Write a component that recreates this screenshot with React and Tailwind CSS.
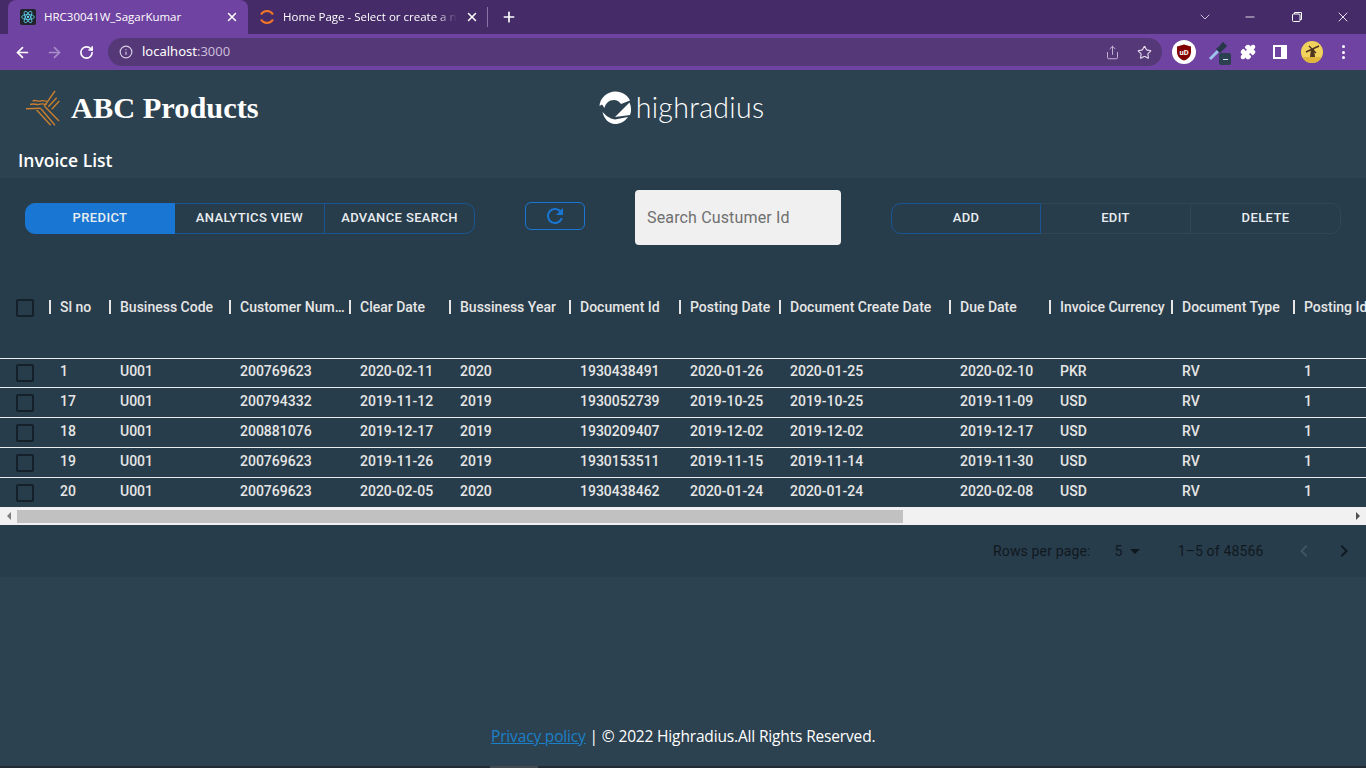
import React from 'react';
import { ArrowLeft, ArrowRight, RotateCw, Info, Share, Star, Puzzle, X, Plus, ChevronDown, Minus } from 'lucide-react';

const columns = [
  { label: 'Sl no', key: 'sl', width: 'w-[60px]' },
  { label: 'Business Code', key: 'code', width: 'w-[120px]' },
  { label: 'Customer Number', key: 'cust', width: 'w-[120px]' },
  { label: 'Clear Date', key: 'clear', width: 'w-[100px]' },
  { label: 'Bussiness Year', key: 'year', width: 'w-[120px]' },
  { label: 'Document Id', key: 'doc', width: 'w-[110px]' },
  { label: 'Posting Date', key: 'post', width: 'w-[100px]' },
  { label: 'Document Create Date', key: 'create', width: 'w-[170px]' },
  { label: 'Due Date', key: 'due', width: 'w-[100px]' },
  { label: 'Invoice Currency', key: 'cur', width: 'w-[122px]' },
  { label: 'Document Type', key: 'type', width: 'w-[122px]' },
  { label: 'Posting Id', key: 'pid', width: 'w-[122px]' },
];

const rows = [
  { sl: '1', code: 'U001', cust: '200769623', clear: '2020-02-11', year: '2020', doc: '1930438491', post: '2020-01-26', create: '2020-01-25', due: '2020-02-10', cur: 'PKR', type: 'RV', pid: '1' },
  { sl: '17', code: 'U001', cust: '200794332', clear: '2019-11-12', year: '2019', doc: '1930052739', post: '2019-10-25', create: '2019-10-25', due: '2019-11-09', cur: 'USD', type: 'RV', pid: '1' },
  { sl: '18', code: 'U001', cust: '200881076', clear: '2019-12-17', year: '2019', doc: '1930209407', post: '2019-12-02', create: '2019-12-02', due: '2019-12-17', cur: 'USD', type: 'RV', pid: '1' },
  { sl: '19', code: 'U001', cust: '200769623', clear: '2019-11-26', year: '2019', doc: '1930153511', post: '2019-11-15', create: '2019-11-14', due: '2019-11-30', cur: 'USD', type: 'RV', pid: '1' },
  { sl: '20', code: 'U001', cust: '200769623', clear: '2020-02-05', year: '2020', doc: '1930438462', post: '2020-01-24', create: '2020-01-24', due: '2020-02-08', cur: 'USD', type: 'RV', pid: '1' },
];

const Checkbox = () => (
  <div className="w-[50px] shrink-0 pl-[13px] flex items-center">
    <svg width="24" height="24" viewBox="0 0 24 24" fill="#14202a">
      <path d="M19 5v14H5V5h14m0-2H5c-1.1 0-2 .9-2 2v14c0 1.1.9 2 2 2h14c1.1 0 2-.9 2-2V5c0-1.1-.9-2-2-2z" />
    </svg>
  </div>
);

const ReactFavicon = () => (
  <div className="w-[16px] h-[16px] rounded-[2px] bg-[#20232a] flex items-center justify-center">
    <svg width="14" height="14" viewBox="-12 -12 24 24" fill="none" stroke="#61dafb" strokeWidth="1.3">
      <circle r="2" fill="#61dafb" stroke="none" />
      <ellipse rx="11" ry="4.2" />
      <ellipse rx="11" ry="4.2" transform="rotate(60)" />
      <ellipse rx="11" ry="4.2" transform="rotate(120)" />
    </svg>
  </div>
);

const ChromeBar = () => (
  <div className="font-['Open_Sans',sans-serif]">
    <div className="h-[34px] bg-[#452b68] flex items-end">
      <div className="ml-[8px] w-[240px] h-[34px] bg-[#6f43a1] rounded-t-[8px] flex items-center pl-[12px] pr-[9px] gap-[8px]">
        <ReactFavicon />
        <span className="text-[11.5px] text-white flex-1 truncate">HRC30041W_SagarKumar</span>
        <X size={14} color="#fff" strokeWidth={2.5} />
      </div>
      <div className="w-[239px] h-[34px] flex items-center pl-[11px] pr-[8px] gap-[8px]">
        <svg width="16" height="16" viewBox="0 0 16 16" fill="none" stroke="#f37626" strokeWidth="2">
          <path d="M2 5.5 A7 7 0 0 1 14 5.5" />
          <path d="M2 10.5 A7 7 0 0 0 14 10.5" />
        </svg>
        <span className="text-[11.5px] text-white flex-1 whitespace-nowrap overflow-hidden [mask-image:linear-gradient(to_right,black_88%,transparent)]">Home Page - Select or create a new</span>
        <X size={14} color="#fff" strokeWidth={2.5} />
      </div>
      <div className="w-[1px] h-[20px] bg-[#8a75a5] mb-[7px]" />
      <div className="h-[34px] flex items-center ml-[13px]">
        <Plus size={16} color="#fff" strokeWidth={2.5} />
      </div>
      <div className="ml-auto h-[34px] flex items-center">
        <ChevronDown size={16} color="#e0d8ea" strokeWidth={1.3} className="mr-[30px]" />
        <Minus size={14} color="#fff" strokeWidth={1.4} className="mr-[34px]" />
        <svg width="12" height="12" viewBox="0 0 12 12" fill="none" stroke="#fff" className="mr-[32px]">
          <rect x="1.5" y="3" width="7.5" height="7.5" rx="1" />
          <path d="M3.5 3V1.5h7V8.5H9" />
        </svg>
        <X size={16} color="#fff" strokeWidth={1.3} className="mr-[15px]" />
      </div>
    </div>
    <div className="h-[36px] bg-[#6f43a1] flex items-center pl-[14px]">
      <ArrowLeft size={17} color="#fff" strokeWidth={2.4} />
      <ArrowRight size={17} color="#a98cca" strokeWidth={2.4} className="ml-[15px]" />
      <RotateCw size={15} color="#fff" strokeWidth={2.6} className="ml-[16px]" />
      <div className="ml-[14px] w-[1054px] h-[28px] rounded-full bg-[#553878] flex items-center pl-[11px] pr-[10px]">
        <Info size={14} color="#d8cfe4" strokeWidth={2} />
        <span className="ml-[9px] text-[13px] text-white font-['Noto_Sans',sans-serif]">localhost<span className="text-[#c9bcd9]">:3000</span></span>
        <Share size={15} color="#c9bcd9" strokeWidth={1.5} className="ml-auto mr-[17px]" />
        <Star size={15} color="#e4dcec" strokeWidth={1.8} />
      </div>
      <div className="ml-[10px] w-[24px] h-[24px] rounded-full bg-white flex items-center justify-center">
        <svg width="16" height="17" viewBox="0 0 16 17">
          <path d="M8 0.5 L15 2.5 V8 C15 12.5 11.5 15.5 8 16.5 C4.5 15.5 1 12.5 1 8 V2.5 Z" fill="#800000" />
          <text x="8" y="11" textAnchor="middle" fontSize="7.5" fontWeight="700" fill="#fff" fontFamily="Roboto, sans-serif">uD</text>
        </svg>
      </div>
      <div className="ml-[11px] w-[24px] h-[24px] relative">
        <svg width="20" height="20" viewBox="0 0 20 20" fill="none" className="absolute left-[1px] top-[1px]">
          <path d="M2 18 L10 10" stroke="#9ec4ee" strokeWidth="3" />
          <path d="M9 7 L13 11 M11 8 L15 3 L17 5 L12 10" stroke="#27384a" strokeWidth="3" />
        </svg>
        <div className="absolute left-[12px] top-[13px] w-[12px] h-[12px] rounded-[2px] bg-[#2b4050] flex items-center justify-center">
          <div className="w-[5px] h-[1px] bg-[#d9e2ea]" />
        </div>
      </div>
      <Puzzle size={16} color="#fff" fill="#fff" className="ml-[9px]" />
      <div className="ml-[17px] w-[14px] h-[14px] border-[2px] border-white flex justify-end">
        <div className="w-[4px] bg-white" />
      </div>
      <div className="ml-[14px] w-[22px] h-[22px] rounded-full bg-[#f1d25c] overflow-hidden flex items-center justify-center">
        <svg width="22" height="22" viewBox="0 0 22 22">
          <path d="M0 16 H22 V22 H0 Z" fill="#e0b63f" />
          <path d="M9 16 L10 8 H13 L14 16 Z" fill="#4d3320" />
          <path d="M5 11 L18 5 M8 5 L15 12" stroke="#4d3320" strokeWidth="1.4" />
        </svg>
      </div>
      <div className="ml-[19px] flex flex-col gap-[2.5px]">
        <div className="w-[3px] h-[3px] rounded-full bg-white" />
        <div className="w-[3px] h-[3px] rounded-full bg-white" />
        <div className="w-[3px] h-[3px] rounded-full bg-white" />
      </div>
    </div>
    <div className="h-[1px] bg-[#2d4250]" />
  </div>
);

const AbcLogo = () => (
  <svg width="36" height="38" viewBox="0 0 36 38" fill="none" stroke="#c97f30" strokeWidth="1.4">
    <path d="M6.7 11 C10 9.5 12 12 15 10.8 C17 10 19 11.5 20.7 11" />
    <path d="M4 14.5 C8 13 11 15.5 14 14.2 C17 13 19 15 20.7 14.3" />
    <path d="M0 18.7 L14.7 18.2" />
    <path d="M14.7 18.5 L29 35.3" />
    <path d="M10.7 20 L24.7 35.3" />
    <path d="M19 16.7 L33 31" />
    <path d="M18 16.7 L29 1" />
    <path d="M22.3 16.7 L30.7 7.7" />
    <path d="M25.7 19.3 L33.3 11" />
  </svg>
);

const HighradiusMark = () => (
  <svg width="33" height="34" viewBox="0 0 33 34" fill="#fff">
    <path d="M0.5 15 C1 7 8 0.5 16.5 0.5 C23 0.5 28.5 4 31 9.5 L22 13 C20 10.5 18 9 15 9 C10 9 6.5 12.5 5.5 17 L3 13.5 Z" />
    <path d="M16 26 L30.5 11.5 C32.5 16 32.5 20.5 31 24 Z" />
    <path d="M3.5 21 C7 24.5 10 27.5 16 28.5 L29 26 C26 30.5 21 33 16 33 C10 33 5 28 3.5 21 Z" />
  </svg>
);

const ButtonGroup = ({ labels, active, muted }) => (
  <div className="flex">
    {labels.map((label, i) => (
      <button
        key={label}
        className={`h-[31px] pb-[2px] text-[13px] font-medium tracking-[0.37px] uppercase text-[#e8edf1] border ${i > 0 ? 'ml-[-1px] w-[151px]' : 'w-[150px] relative z-10'} ${i === 0 ? 'rounded-l-[10px]' : ''} ${i === labels.length - 1 ? 'rounded-r-[10px]' : ''} ${label === active ? 'bg-[#1976d2] border-[#1976d2]' : muted && i > 0 ? 'border-[#314756]' : 'border-[#1a5590]'}`}
      >
        {label}
      </button>
    ))}
  </div>
);

const Toolbar = () => (
  <div className="h-[84px] flex items-start pl-[25px]">
    <div className="mt-[25px]">
      <ButtonGroup labels={['Predict', 'Analytics View', 'Advance Search']} active="Predict" />
    </div>
    <button className="mt-[24px] ml-[50px] w-[60px] h-[28px] border border-[#1976d2] rounded-[6px] flex items-center justify-center">
      <svg width="24" height="24" viewBox="0 0 24 24" fill="#1976d2">
        <path d="M17.65 6.35C16.2 4.9 14.21 4 12 4c-4.42 0-7.99 3.58-7.99 8s3.57 8 7.99 8c3.73 0 6.84-2.55 7.73-6h-2.08c-.82 2.33-3.04 4-5.65 4-3.31 0-6-2.69-6-6s2.69-6 6-6c1.66 0 3.14.69 4.22 1.78L13 11h7V4l-2.35 2.35z" />
      </svg>
    </button>
    <div className="mt-[12px] ml-[50px] w-[206px] h-[55px] bg-[#f0f0f0] rounded-[4px] flex items-center pl-[12px] text-[16px] text-[#6f6f6f] tracking-[0.15px]">
      Search Custumer Id
    </div>
    <div className="mt-[25px] ml-[50px]">
      <ButtonGroup labels={['Add', 'Edit', 'Delete']} muted />
    </div>
  </div>
);

const DataTable = () => (
  <div className="overflow-hidden">
    <div className="h-[97px] flex items-center pb-[4px] border-b border-[#e8ecef]">
      <Checkbox />
      {columns.map((col, i) => (
        <div key={col.key} className={`${col.width} shrink-0 flex items-center pr-[4px] pb-[2px]`}>
          <div className="w-[2px] h-[14px] bg-[#e6e6e6] shrink-0 ml-[-1px] mr-[9px]" />
          <span className={`text-[14px] font-medium text-[#e6e6e6] whitespace-nowrap ${i === 2 ? 'truncate' : ''}`}>{col.label}</span>
        </div>
      ))}
    </div>
    {rows.map((row, i) => (
      <div
        key={row.sl}
        className={`flex items-center ${i === 0 || i === rows.length - 1 ? 'h-[29px]' : 'h-[30px]'} ${i < rows.length - 1 ? 'border-b border-[#e8ecef]' : ''}`}
      >
        <Checkbox />
        {columns.map(col => (
          <div key={col.key} className={`${col.width} shrink-0 pl-[10px] text-[14px] font-medium text-[#e6e6e6] ${i === 0 ? 'pb-[4px]' : i === rows.length - 1 ? 'pb-[3px]' : 'pb-[2px]'}`}>
            {row[col.key]}
          </div>
        ))}
      </div>
    ))}
  </div>
);

const ScrollBar = () => (
  <div className="h-[18px] bg-[#f1f1f1] flex items-center">
    <div className="w-[17px] flex justify-center">
      <div className="w-0 h-0 border-y-[4px] border-y-transparent border-r-[4px] border-r-[#7d7d7d]" />
    </div>
    <div className="w-[886px] h-[13px] bg-[#c1c1c1]" />
    <div className="ml-auto w-[17px] flex justify-center">
      <div className="w-0 h-0 border-y-[4px] border-y-transparent border-l-[4px] border-l-[#505050]" />
    </div>
  </div>
);

const Pagination = () => (
  <div className="h-[52px] flex items-center text-[14px] tracking-[0.15px] text-[#10181f] pl-[993px]">
    <span>Rows per page:</span>
    <span className="ml-[24px]">5</span>
    <svg width="24" height="24" viewBox="0 0 24 24" fill="#10181f">
      <path d="M7 10l5 5 5-5z" />
    </svg>
    <span className="ml-[31px]">1–5 of 48566</span>
    <svg width="24" height="24" viewBox="0 0 24 24" fill="#3f5564" className="ml-[28px]">
      <path d="M15.41 7.41 14 6l-6 6 6 6 1.41-1.41L10.83 12z" />
    </svg>
    <svg width="24" height="24" viewBox="0 0 24 24" fill="#0f1a22" className="ml-[16px]">
      <path d="M10 6 8.59 7.41 13.17 12l-4.58 4.59L10 18l6-6z" />
    </svg>
  </div>
);

export default function App() {
  return (
    <div className="w-[1366px] h-[768px] overflow-hidden flex flex-col bg-[#2d4250] font-['Roboto',sans-serif]">
      <ChromeBar />
      <div className="h-[107px] flex flex-col">
        <div className="h-[75px] flex items-center">
          <div className="ml-[26px] flex items-center mt-[1px]">
            <AbcLogo />
          </div>
          <h1 className="ml-[9px] text-[30.4px] font-bold text-white font-['Liberation_Serif',serif]">ABC Products</h1>
          <div className="ml-[340px] flex items-center mb-[2px]">
            <HighradiusMark />
            <span className="ml-[4px] text-[28.5px] font-light text-white tracking-[0.3px] font-['Lato',sans-serif] leading-none">highradius</span>
          </div>
        </div>
        <div className="pl-[18px] pt-[3px] text-[17.5px] font-semibold text-white leading-[22px] font-['Open_Sans',sans-serif]">Invoice List</div>
      </div>
      <div className="bg-[#283d4b]">
        <Toolbar />
        <DataTable />
        <ScrollBar />
        <Pagination />
      </div>
      <div className="flex-1 flex flex-col justify-end">
        <div className="h-[41px] pl-[491px] text-[15.5px] text-white font-['Open_Sans',sans-serif] tracking-[-0.16px]">
          <a className="text-[#1b80c8] underline">Privacy policy</a> | © 2022 Highradius.All Rights Reserved.
        </div>
        <div className="h-[2px] bg-[#222b31] pl-[490px]">
          <div className="w-[48px] h-[2px] bg-[#444b50]" />
        </div>
      </div>
    </div>
  );
}
